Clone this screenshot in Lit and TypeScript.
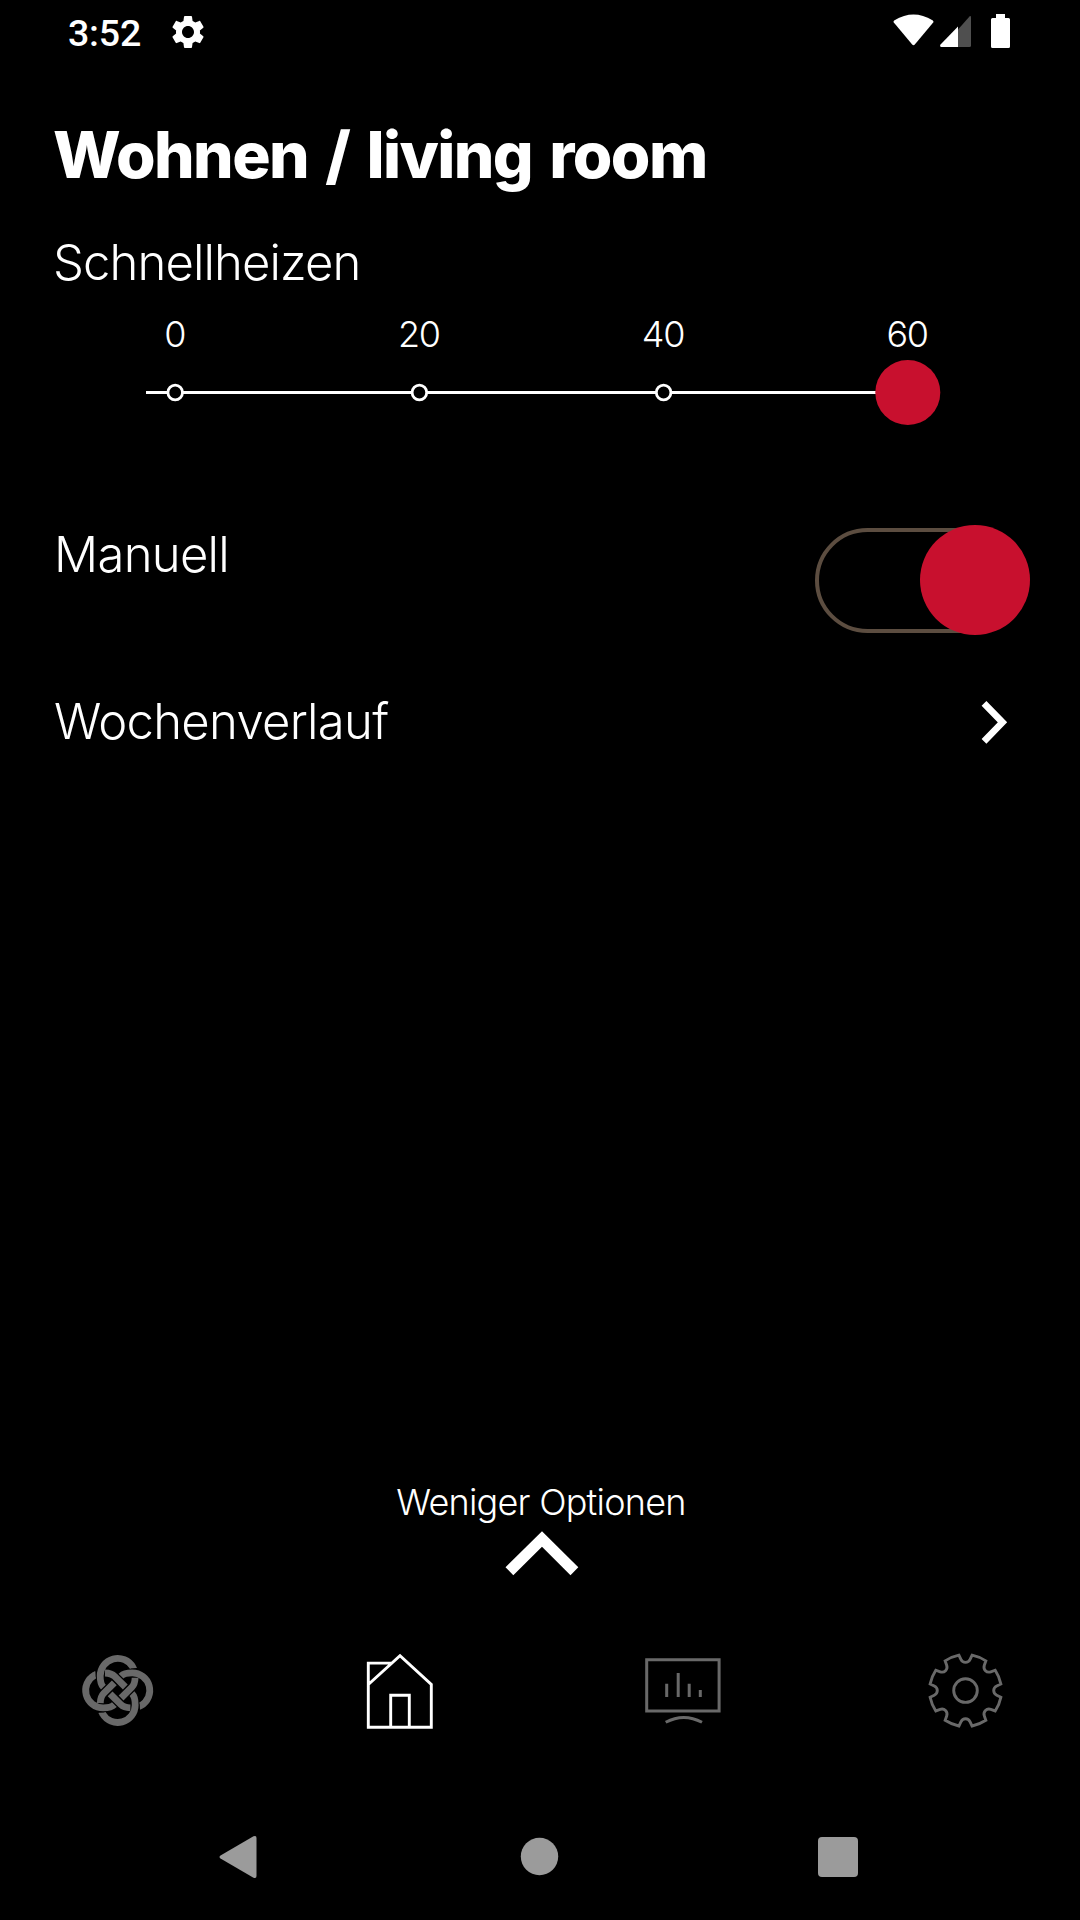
import { LitElement, html, css, svg } from "lit";
import { customElement, property } from "lit/decorators.js";

const NOTCH_ANGLES = [0, 45, 90, 135, 180, 225, 270, 315];

/** Outline of the eight-notched gear, centred on the origin. */
function gearPath(): string {
  const profile = [
    [-6.6, -35.4], [-4.6, -31.2], [-2.6, -27.2], [2.6, -27.2], [4.6, -31.2], [6.6, -35.4],
  ];
  let d = "";
  NOTCH_ANGLES.forEach((deg, i) => {
    const a = (deg * Math.PI) / 180;
    const p = profile.map(([x, y]) =>
      `${(x * Math.cos(a) - y * Math.sin(a)).toFixed(2)},${(x * Math.sin(a) + y * Math.cos(a)).toFixed(2)}`);
    d += `${i === 0 ? "M" : "A40,40 0 0 1 "}${p[0]} L${p[1]} C${p[2]} ${p[3]} ${p[4]} L${p[5]} `;
  });
  const [x, y] = profile[0];
  return `${d}A40,40 0 0 1 ${x},${y}Z`;
}

@customElement("status-bar")
export class StatusBar extends LitElement {
  static styles = css`
    :host { display: flex; height: 76px; box-sizing: border-box; padding: 12px 70px 0 68px; align-items: flex-start; }
    .time { font: 500 37.5px/42px Roboto, sans-serif; letter-spacing: -0.2px; color: #fff; flex: none; }
    .gear { width: 40px; height: 40px; margin-left: 27px; }
    .signals { width: 120px; height: 40px; margin-left: auto; }
    svg { display: block; flex: none; }
  `;
  render() {
    return html`
      <span class="time">3:52</span>
      <svg class="gear" viewBox="0 0 24 24" fill="#fff"><path d="M19.14 12.94c.04-.3.06-.61.06-.94s-.02-.64-.07-.94l2.03-1.58c.18-.14.23-.41.12-.61l-1.92-3.32c-.12-.22-.37-.29-.59-.22l-2.39.96c-.5-.38-1.03-.7-1.62-.94l-.36-2.54c-.04-.24-.24-.41-.48-.41h-3.84c-.24 0-.43.17-.47.41l-.36 2.54c-.59.24-1.13.57-1.62.94l-2.39-.96c-.22-.08-.47 0-.59.22L2.74 8.87c-.12.21-.08.47.12.61l2.03 1.58c-.05.3-.09.63-.09.94s.02.64.07.94l-2.03 1.58c-.18.14-.23.41-.12.61l1.92 3.32c.12.22.37.29.59.22l2.39-.96c.5.38 1.03.7 1.62.94l.36 2.54c.05.24.24.41.48.41h3.84c.24 0 .44-.17.47-.41l.36-2.54c.59-.24 1.13-.56 1.62-.94l2.39.96c.22.08.47 0 .59-.22l1.92-3.32c.12-.22.07-.47-.12-.61l-2.01-1.58zM12 15.6c-1.98 0-3.6-1.62-3.6-3.6s1.62-3.6 3.6-3.6 3.6 1.62 3.6 3.6-1.62 3.6-3.6 3.6z"/></svg>
      <svg class="signals" viewBox="890 12 120 40">
        <path fill="#fff" d="M893.8 22.6Q893 21.200 894.500 20.200Q913.500 8.800 932.500 20.200Q934 21.200 933.200 22.600L914.800 44.600Q913.500 46 912.200 44.600Z"/>
        <path fill="#4f4f4f" d="M958 29.500L969.500 16.400Q971 15.500 971 17.500V45.500Q971 47 969.500 47H958Z"/>
        <path fill="#fff" d="M958 26.500V47H941.200Q939.300 46.500 940.300 44.800Z"/>
        <path fill="#fff" d="M996 14h9v4h3.500q1.500 0 1.500 1.500v27q0 1.500-1.500 1.500h-16q-1.500 0-1.500-1.500v-27q0-1.500 1.500-1.500h3.500z"/>
      </svg>`;
  }
}

@customElement("heat-slider")
export class HeatSlider extends LitElement {
  @property({ attribute: false }) steps: number[] = [];
  static styles = css`
    :host { display: block; }
    .labels { display: grid; grid-template-columns: repeat(4, 244.1px); padding-left: 52.8px; text-align: center; font-size: 36px; line-height: 44px; font-weight: 300; letter-spacing: -1.2px; }
    svg { display: block; width: 1080px; height: 66px; margin-top: 4px; }
  `;
  render() {
    const last = this.steps.length - 1;
    const x = (i: number) => 175.2 + i * 244.2;
    return html`
      <div class="labels">${this.steps.map((s) => html`<span>${s}</span>`)}</div>
      <svg viewBox="0 0 1080 66">
        <line x1="146" x2="907" y1="32.500" y2="32.500" stroke="#fff" stroke-width="3"/>
        ${this.steps.slice(0, last).map((_, i) => svg`<circle cx=${x(i)} cy="32.500" r="7.300" fill="#000" stroke="#fff" stroke-width="2.800"/>`)}
        <circle cx=${x(last)} cy="32.500" r="32.500" fill="#c8102e"/>
      </svg>`;
  }
}

@customElement("toggle-switch")
export class ToggleSwitch extends LitElement {
  static styles = css`
    :host { display: flex; width: 215px; height: 110px; align-items: center; }
    .track { box-sizing: border-box; width: 212px; height: 105px; border: 4px solid #5c4d40; border-radius: 53px; display: flex; align-items: center; justify-content: flex-end; }
    .knob { flex: none; width: 110px; height: 110px; border-radius: 50%; background: #c8102e; margin-right: -7px; }
  `;
  render() {
    return html`<div class="track"><div class="knob"></div></div>`;
  }
}

@customElement("tab-bar")
export class TabBar extends LitElement {
  static styles = css`
    :host { display: flex; height: 120px; padding: 0 55px 0 60px; }
    svg { display: block; flex: none; width: 120px; height: 120px; fill: none; stroke: #696969; }
    .active { stroke: #fff; }
    .cut { fill: #696969; stroke: none; }
    .home { margin-left: 160px; }
    .stats { margin-left: 165px; }
    .settings { margin-left: 160px; }
  `;
  render() {
    const quarter = [0, 90, 180, 270];
    return html`
      <svg viewBox="0 0 120 120">
        <g transform="translate(57.700 60.400)">
          ${quarter.map((r) => svg`<g transform="rotate(${r})" stroke-width="6.800">
            <path d="M15.200 -23.250A17.500 17.500 0 0 0 -17.500 -14.500Q-17.500 -6.500 -14.300 -3.300"/>
            <path class="cut" d="M12.100 -22L12.200 -23L17.900 -25.200L19.300 -22.600L18.500 -22.300Z"/>
            <path d="M7.600 -3.400L-3 -14Q-6.300 -17.300 -12.700 -17.400"/>
          </g>`)}
        </g>
      </svg>
      <svg class="active home" viewBox="0 0 120 120" stroke-width="2.900">
        <path d="M28.300 54.500V97.300H91.300V54.500L60 25.800L28.300 54.500V33.100H51"/>
        <path d="M50.700 97V65.300H69.300V97"/>
      </svg>
      <svg class="stats" viewBox="0 0 120 120" stroke-width="3">
        <path d="M21.700 29.700H94.100V81H21.700Z"/>
        <path d="M41.700 53.700V67M53.200 43V67M64.200 53.700V67M75.300 60V67"/>
        <path d="M40.700 92.300Q58.700 82.500 77 92.300"/>
      </svg>
      <svg class="settings" viewBox="0 0 120 120" stroke-width="2.900">
        <g transform="translate(60.500 60.600)"><path d=${gearPath()}/><circle r="11.800"/></g>
      </svg>`;
  }
}

@customElement("system-nav")
export class SystemNav extends LitElement {
  static styles = css`
    :host { display: flex; height: 60px; padding: 0 222px 0 219px; align-items: center; justify-content: space-between; }
    svg { display: block; width: 40px; height: 44px; fill: #9b9b9b; }
  `;
  render() {
    return html`
      <svg viewBox="0 0 40 44"><path d="M34.500 1.300Q37.500 0 37.500 3V41Q37.500 44 34.500 42.700L1.500 23.500Q-.5 22 1.500 20.500Z"/></svg>
      <svg viewBox="0 0 40 44"><circle cx="20.500" cy="21.500" r="18.700"/></svg>
      <svg viewBox="0 0 40 44"><rect y="2" width="40" height="40" rx="4"/></svg>`;
  }
}

@customElement("app-root")
export class AppRoot extends LitElement {
  static styles = css`
    :host { display: flex; flex-direction: column; width: 1080px; height: 1920px; background: #000; color: #fff; font-family: Inter, "Liberation Sans", sans-serif; overflow: hidden; }
    .title { margin: 39px 0 0 53px; font-size: 64px; line-height: 80px; font-weight: 800; letter-spacing: -1.6px; word-spacing: 4.8px; white-space: nowrap; }
    .label { font-size: 49px; line-height: 60px; font-weight: 300; letter-spacing: -0.7px; white-space: nowrap; }
    .quick { margin: 38px 0 0 53px; letter-spacing: -0.9px; }
    .slider { margin-top: 19px; }
    .row { display: flex; justify-content: space-between; align-items: flex-start; padding-left: 54px; }
    .manual { margin-top: 99px; height: 110px; padding-right: 50px; }
    .week { margin-top: 56px; padding-right: 72px; }
    .week .label { margin-top: 1px; }
    .next { display: block; width: 27px; height: 44px; margin-top: 9px; }
    .less { margin-top: auto; display: flex; flex-direction: column; align-items: center; font-size: 36px; line-height: 44px; font-weight: 300; letter-spacing: -0.76px; }
    .less span { padding-left: 2px; }
    .less svg { display: block; width: 80px; height: 46px; margin: 6px 0 0 3px; }
    .tabs { margin-top: 54px; }
    .system { margin: 77px 0 33px; }
  `;
  render() {
    return html`
      <status-bar></status-bar>
      <div class="title">Wohnen / living room</div>
      <div class="label quick">Schnellheizen</div>
      <heat-slider class="slider" .steps=${[0, 20, 40, 60]}></heat-slider>
      <div class="row manual"><span class="label">Manuell</span><toggle-switch></toggle-switch></div>
      <div class="row week">
        <span class="label">Wochenverlauf</span>
        <svg class="next" viewBox="981 700 27 44"><path d="M984 703.300L1002.500 722.300L984 741.300" fill="none" stroke="#fff" stroke-width="6.700"/></svg>
      </div>
      <div class="less">
        <span>Weniger Optionen</span>
        <svg viewBox="501.700 1530 80 46"><path fill="#fff" d="M541.700 1531.300L578 1567.300L570.200 1575.200L541.700 1546.800L513 1575.200L505.200 1567.300Z"/></svg>
      </div>
      <tab-bar class="tabs"></tab-bar>
      <system-nav class="system"></system-nav>`;
  }
}
